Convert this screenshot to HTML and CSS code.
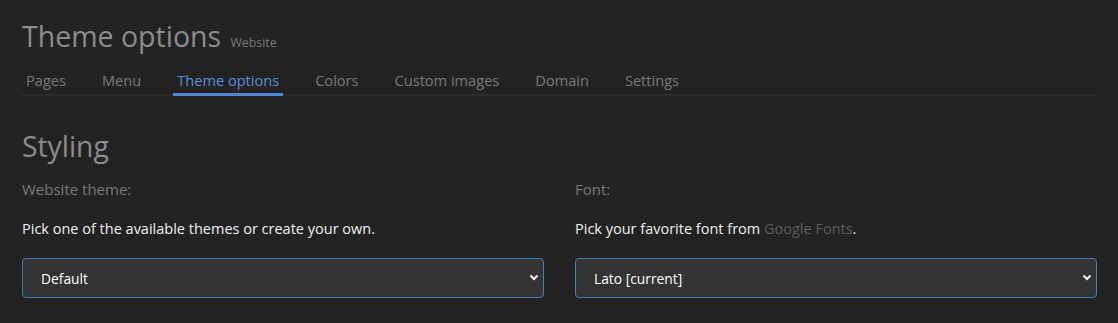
FILE: index.html
```html
<!DOCTYPE html>
<html>
<head>
  <link rel="stylesheet" href="styles.css">
</head>
<body>

  <div class="page">
    <!-- Header -->
    <h1 class="title">Theme options <small>Website</small></h1>

    <nav class="tabs">
      <a class="tab">Pages</a>
      <a class="tab">Menu</a>
      <a class="tab active">Theme options</a>
      <a class="tab">Colors</a>
      <a class="tab">Custom images</a>
      <a class="tab">Domain</a>
      <a class="tab">Settings</a>
    </nav>

    <h2 class="section">Styling</h2>

    <div class="columns">
      <div class="field">
        <label class="label">Website theme:</label>
        <p class="help">Pick one of the available themes or create your own.</p>
        <div class="select-wrap">
          <select class="select">
            <option>Default</option>
          </select>
          <svg class="chevron" width="10" height="7" viewBox="0 0 10 7"><path d="M1.5 1.5 L5 5 L8.5 1.5" fill="none" stroke="#fff" stroke-width="2"/></svg>
        </div>
      </div>

      <div class="field">
        <label class="label">Font:</label>
        <p class="help">Pick your favorite font from <a class="link">Google Fonts</a>.</p>
        <div class="select-wrap">
          <select class="select">
            <option>Lato [current]</option>
          </select>
          <svg class="chevron" width="10" height="7" viewBox="0 0 10 7"><path d="M1.5 1.5 L5 5 L8.5 1.5" fill="none" stroke="#fff" stroke-width="2"/></svg>
        </div>
      </div>
    </div>
  </div>

</body>
</html>
```

FILE: styles.css
```css
body {
  margin: 0;
  background: #222222;
  color: #eeeeee;
  font-family: "Open Sans", "Noto Sans", sans-serif;
}

.page {
  padding: 14px 21px 0 22px;
}

.title {
  margin: 0;
  font-size: 28.5px;
  font-weight: 400;
  line-height: 44px;
  color: #8c8c8c;
}
.title small {
  font-size: 12.3px;
  color: #7a7a7a;
  margin-left: 2px;
}

.tabs {
  display: flex;
  gap: 28px;
  margin-top: 4px;
  border-bottom: 2px solid #2b2b2b;
}

.tab {
  padding: 0 4px 2px;
  font-size: 14.6px;
  line-height: 22px;
  color: #7a7a7a;
  border-bottom: 3px solid transparent;
  margin-bottom: -2px;
}
.tab.active {
  color: #5b8fdb;
  border-bottom-color: #4f86d6;
}

.section {
  margin: 32px 0 0;
  font-size: 28.3px;
  font-weight: 400;
  line-height: 36px;
  color: #8c8c8c;
}

.columns {
  display: grid;
  grid-template-columns: 1fr 1fr;
  gap: 31px;
}

.label {
  display: block;
  margin-top: 14px;
  font-size: 15px;
  line-height: 22px;
  color: #7a7a7a;
}

.help {
  margin: 19px 0 0;
  font-size: 14.5px;
  line-height: 20px;
  color: #f0f0f0;
}

.link {
  color: #5e5e5e;
}

.select-wrap {
  position: relative;
  margin-top: 19px;
}

.select {
  appearance: none;
  -webkit-appearance: none;
  display: block;
  width: 100%;
  height: 40px;
  padding: 0 18px;
  background: #333333;
  border: 1px solid #4a78bd;
  border-radius: 4px;
  color: #ffffff;
  font-family: "Open Sans", "Noto Sans", sans-serif;
  font-size: 13.8px;
  outline: none;
}

.chevron {
  position: absolute;
  right: 5px;
  top: 16px;
}
```
